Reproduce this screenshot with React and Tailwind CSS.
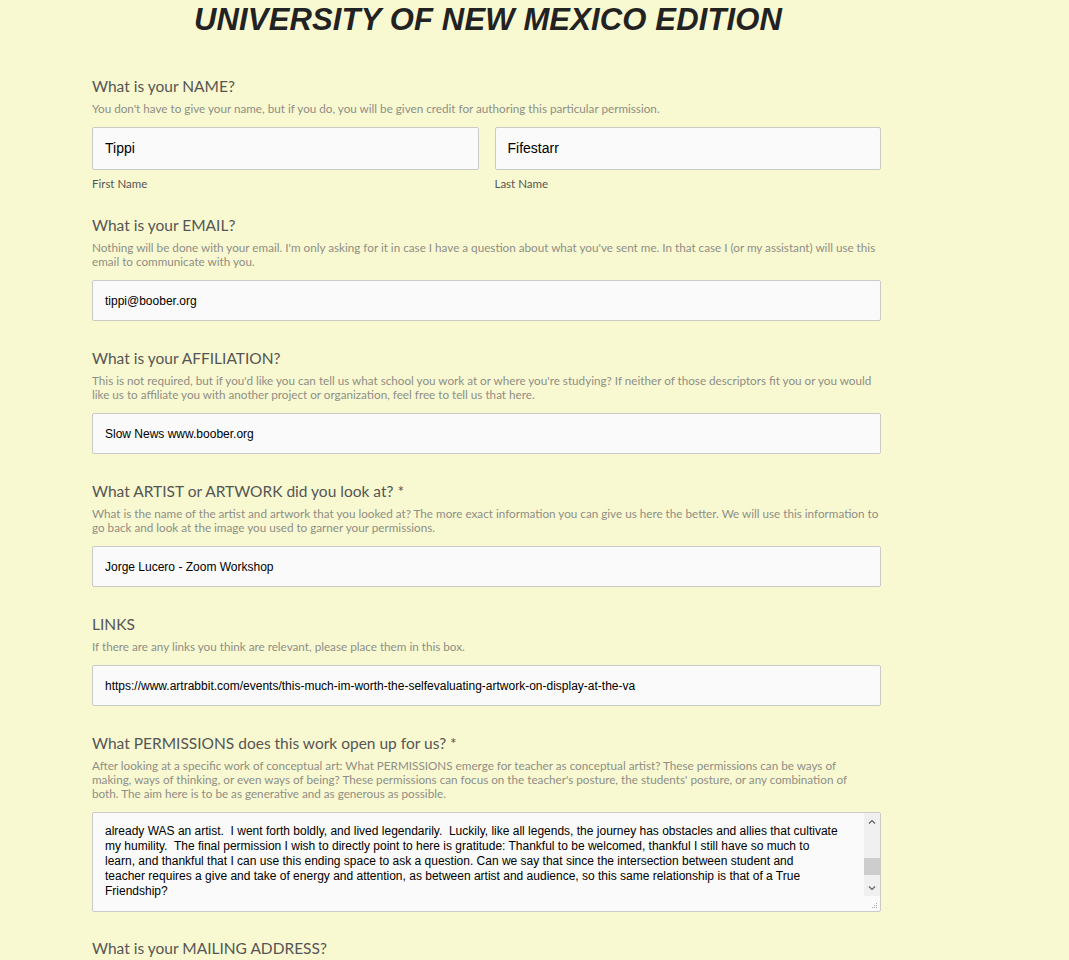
import React from "react";

const label = "text-[15.5px] leading-[20px] text-[#555555]";
const desc = "mt-[5px] text-[11.7px] leading-[14px] text-[#8e8e86] whitespace-nowrap";
const input = "mt-[12px] h-[41px] w-full border border-[#cacaca] rounded-[2px] bg-[#fafafa] px-[12px] flex items-center text-[12px] text-black";

function Field({ title, children, value }) {
  return (
    <div className="mb-[27px]">
      <div className={label}>{title}</div>
      <div className={desc}>{children}</div>
      <div className={input} style={{ fontFamily: "'Liberation Sans', Arial, sans-serif" }}>{value}</div>
    </div>
  );
}

export default function App() {
  return (
    <div className="min-h-[960px] w-full bg-[#f9f9d1] overflow-hidden" style={{ fontFamily: "Lato, 'Open Sans', sans-serif" }}>
      <h1
        className="h-[40px] pt-[2px] pl-[194px] text-[31px] leading-[36px] font-bold italic tracking-[0.15px] text-[#222222] whitespace-nowrap"
        style={{ fontFamily: "'Liberation Sans', Arial, sans-serif" }}
      >
        UNIVERSITY OF NEW MEXICO EDITION
      </h1>

      <div className="ml-[92px] w-[789px] pt-[36px]">
        <div className="mb-[24px]">
          <div className={label}>What is your NAME?</div>
          <div className={desc}>You don't have to give your name, but if you do, you will be given credit for authoring this particular permission.</div>
          <div className="mt-[12px] flex gap-[16px]">
            <div className="flex-1">
              <div className="h-[43px] border border-[#cacaca] rounded-[2px] bg-[#fafafa] px-[12px] flex items-center text-[14px] text-black" style={{ fontFamily: "'Liberation Sans', Arial, sans-serif" }}>Tippi</div>
              <div className="mt-[7px] text-[11.5px] leading-[14px] text-[#555555]">First Name</div>
            </div>
            <div className="flex-1">
              <div className="h-[43px] border border-[#cacaca] rounded-[2px] bg-[#fafafa] px-[12px] flex items-center text-[14px] text-black" style={{ fontFamily: "'Liberation Sans', Arial, sans-serif" }}>Fifestarr</div>
              <div className="mt-[7px] text-[11.5px] leading-[14px] text-[#555555]">Last Name</div>
            </div>
          </div>
        </div>

        <Field title="What is your EMAIL?" value="tippi@boober.org">
          Nothing will be done with your email. I'm only asking for it in case I have a question about what you've sent me. In that case I (or my assistant) will use this
          <br />
          email to communicate with you.
        </Field>

        <Field title="What is your AFFILIATION?" value="Slow News www.boober.org">
          This is not required, but if you'd like you can tell us what school you work at or where you're studying? If neither of those descriptors fit you or you would
          <br />
          like us to affiliate you with another project or organization, feel free to tell us that here.
        </Field>

        <Field title="What ARTIST or ARTWORK did you look at? *" value="Jorge Lucero - Zoom Workshop">
          What is the name of the artist and artwork that you looked at? The more exact information you can give us here the better. We will use this information to
          <br />
          go back and look at the image you used to garner your permissions.
        </Field>

        <Field title="LINKS" value="https://www.artrabbit.com/events/this-much-im-worth-the-selfevaluating-artwork-on-display-at-the-va">
          If there are any links you think are relevant, please place them in this box.
        </Field>

        <div className="mb-[26px]">
          <div className={label}>What PERMISSIONS does this work open up for us? *</div>
          <div className={desc}>
            After looking at a specific work of conceptual art: What PERMISSIONS emerge for teacher as conceptual artist? These permissions can be ways of
            <br />
            making, ways of thinking, or even ways of being? These permissions can focus on the teacher's posture, the students' posture, or any combination of
            <br />
            both. The aim here is to be as generative and as generous as possible.
          </div>
          <div className="mt-[12px] h-[100px] border border-[#cacaca] rounded-[2px] bg-[#fafafa] flex">
            <div className="flex-1 pl-[12px] pt-[11px] text-[12px] leading-[15px] text-black whitespace-pre overflow-hidden" style={{ fontFamily: "'Liberation Sans', Arial, sans-serif" }}>
              {"already WAS an artist.  I went forth boldly, and lived legendarily.  Luckily, like all legends, the journey has obstacles and allies that cultivate\nmy humility.  The final permission I wish to directly point to here is gratitude: Thankful to be welcomed, thankful I still have so much to\nlearn, and thankful that I can use this ending space to ask a question. Can we say that since the intersection between student and\nteacher requires a give and take of energy and attention, as between artist and audience, so this same relationship is that of a True\nFriendship?"}
            </div>
            <div className="w-[16px] flex flex-col">
              <div className="h-[83px] bg-[#f0f0f0] flex flex-col">
                <div className="h-[16px] flex items-center justify-center">
                  <svg width="8" height="5" viewBox="0 0 8 5"><path d="M1 4.5 L4 1.5 L7 4.5" stroke="#606060" strokeWidth="1.2" fill="none" /></svg>
                </div>
                <div className="flex-1 flex flex-col">
                  <div className="h-[29px]" />
                  <div className="h-[17px] bg-[#cdcdcd]" />
                  <div className="flex-1" />
                </div>
                <div className="h-[16px] flex items-center justify-center">
                  <svg width="8" height="5" viewBox="0 0 8 5"><path d="M1 0.5 L4 3.5 L7 0.5" stroke="#606060" strokeWidth="1.2" fill="none" /></svg>
                </div>
              </div>
              <div className="flex-1 flex items-end justify-end pr-[2px] pb-[2px]">
                <svg width="7" height="7" viewBox="0 0 7 7">
                  <rect x="5" y="1" width="1" height="1" fill="#aaa" />
                  <rect x="3" y="3" width="1" height="1" fill="#aaa" />
                  <rect x="5" y="3" width="1" height="1" fill="#aaa" />
                  <rect x="1" y="5" width="1" height="1" fill="#aaa" />
                  <rect x="3" y="5" width="1" height="1" fill="#aaa" />
                  <rect x="5" y="5" width="1" height="1" fill="#aaa" />
                </svg>
              </div>
            </div>
          </div>
        </div>

        <div className={label}>What is your MAILING ADDRESS?</div>
      </div>
    </div>
  );
}
